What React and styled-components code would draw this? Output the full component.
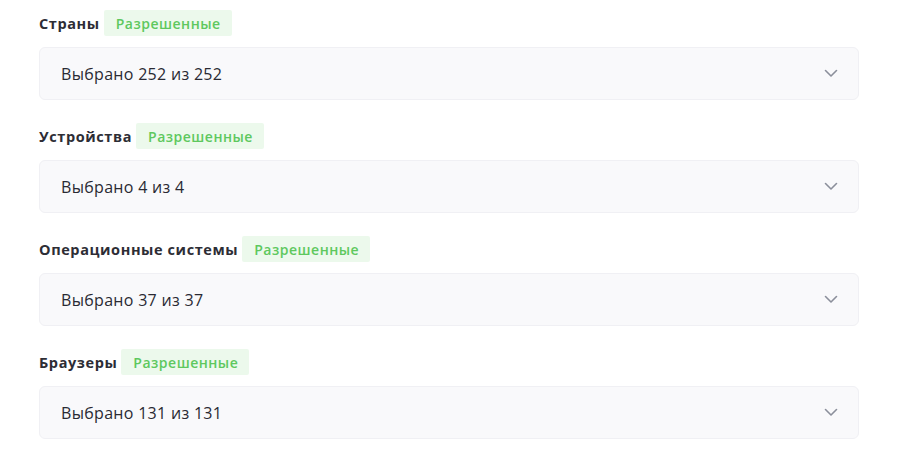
import React from "react";
import styled, { createGlobalStyle } from "styled-components";

const GlobalStyle = createGlobalStyle`
  body {
    margin: 0;
    background: #ffffff;
    font-family: "Open Sans", "Noto Sans", sans-serif;
  }
`;

const groups = [
  { label: "Страны", value: "Выбрано 252 из 252" },
  { label: "Устройства", value: "Выбрано 4 из 4" },
  { label: "Операционные системы", value: "Выбрано 37 из 37" },
  { label: "Браузеры", value: "Выбрано 131 из 131" },
];

const Chevron = () => (
  <svg width="14" height="9" viewBox="0 0 14 9" fill="none">
    <path
      d="M1.5 1.5L7 7L12.5 1.5"
      stroke="#8b8f9b"
      strokeWidth="1.6"
      strokeLinecap="round"
      strokeLinejoin="round"
    />
  </svg>
);

const App = () => {
  return (
    <Page>
      <GlobalStyle />
      {groups.map((g) => (
        <Group key={g.label}>
          <Header>
            <Label>{g.label}</Label>
            <Badge>Разрешенные</Badge>
          </Header>
          <Select>
            <Value>{g.value}</Value>
            <Chevron />
          </Select>
        </Group>
      ))}
    </Page>
  );
};

export default App;

const Page = styled.div`
  width: 820px;
  padding: 10px 0 0 39px;
  display: flex;
  flex-direction: column;
  gap: 23px;
`;

const Group = styled.div`
  display: flex;
  flex-direction: column;
  gap: 11px;
`;

const Header = styled.div`
  display: flex;
  align-items: center;
  gap: 4px;
  height: 26px;
`;

const Label = styled.span`
  font-size: 14.5px;
  font-weight: 700;
  letter-spacing: 0.6px;
  color: #2d2d35;
`;

const Badge = styled.span`
  display: flex;
  align-items: center;
  height: 26px;
  padding: 0 11px 0 12px;
  background: #ecf9ec;
  color: #5ec85e;
  font-size: 14px;
  font-weight: 600;
  letter-spacing: 0.5px;
  border-radius: 2px;
`;

const Select = styled.div`
  display: flex;
  align-items: center;
  justify-content: space-between;
  box-sizing: border-box;
  height: 53px;
  padding: 0 20px 0 21px;
  background: #f9f9fb;
  border: 1px solid #f0f0f4;
  border-radius: 6px;
`;

const Value = styled.span`
  font-size: 16px;
  letter-spacing: 0.3px;
  color: #2a2a33;
`;
